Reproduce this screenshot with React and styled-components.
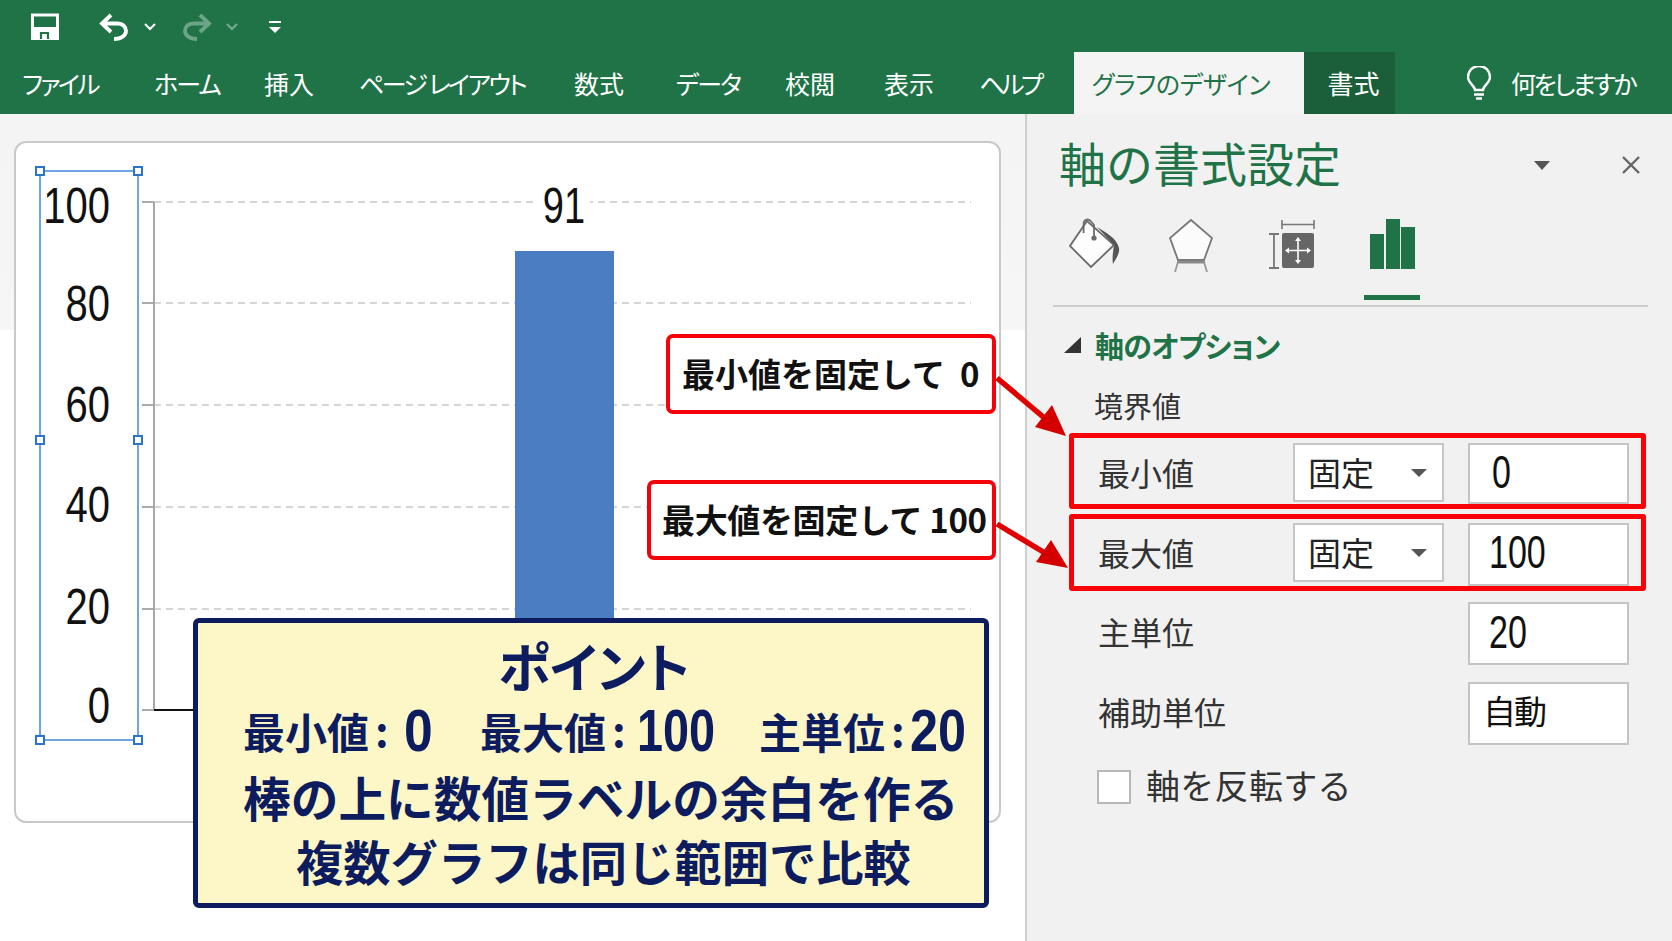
import React from "react";
import styled, { createGlobalStyle } from "styled-components";

const JP = `"Noto Sans CJK JP", "Noto Sans", sans-serif`;
const LATIN = `"Liberation Sans", "Noto Sans", sans-serif`;

const Global = createGlobalStyle`
  html, body { margin: 0; padding: 0; background: #fff; }
  body { font-family: ${JP}; font-feature-settings: "palt"; }
  * { box-sizing: border-box; }
`;

const Page = styled.div`
  position: relative;
  width: 1672px;
  height: 941px;
  overflow: hidden;
  display: flex;
  flex-direction: column;
`;

const Ribbon = styled.header`
  height: 114px;
  flex: none;
  background: #1f7347;
  color: #fff;
  display: flex;
  flex-direction: column;
`;
const Qat = styled.div`
  height: 52px;
  display: flex;
  align-items: center;
  padding-left: 31px;
`;
const QatIcon = styled.svg`
  display: block;
  flex: none;
  margin-right: ${(p) => p.$mr || 0}px;
  margin-top: 2px;
`;
const TabRow = styled.nav`
  height: 62px;
  display: flex;
  font-size: 25px;
  line-height: 62px;
`;
const Tab = styled.div`
  width: ${(p) => p.$w}px;
  flex: none;
  text-align: center;
  white-space: nowrap;
  font-size: ${(p) => p.$size || 25}px;
  letter-spacing: ${(p) => p.$ls || 0}px;
  padding: 0 ${(p) => p.$pr || 0}px 0 ${(p) => p.$pl || 0}px;
  margin-left: ${(p) => p.$ml || 0}px;
  color: ${(p) => (p.$active ? "#1f7347" : "#fff")};
  background: ${(p) => (p.$active ? "#f4f4f4" : p.$dark ? "#1b5f3a" : "transparent")};
`;
const Tell = styled.div`
  display: flex;
  align-items: center;
  gap: 20px;
  margin-left: 72px;
  white-space: nowrap;
  letter-spacing: -2.5px;
`;

const Work = styled.main`
  flex: 1;
  display: flex;
  min-height: 0;
`;
const Canvas = styled.section`
  width: 1027px;
  flex: none;
  padding: 27px 25px 0 14px;
  border-right: 2px solid #cfcfcf;
  background: linear-gradient(#f4f4f4 0, #f6f6f6 216px, #fff 216px);
`;
const Card = styled.div`
  width: 987px;
  height: 682px;
  background: #fff;
  border: 2px solid #c9c9c9;
  border-radius: 12px;
  overflow: hidden;
`;
const ChartSvg = styled.svg`
  display: block;
  width: 983px;
  height: 678px;
  font-family: ${LATIN};
`;

const Panel = styled.aside`
  flex: 1;
  background: #f1f1f1;
  color: #333;
`;
const TitleRow = styled.div`
  display: flex;
  align-items: center;
  margin-top: 28px;
  height: 46px;
  padding-left: 32px;
`;
const Title = styled.h2`
  margin: -6px 0 0;
  font-size: 47px;
  font-weight: 400;
  line-height: 46px;
  color: #1f7347;
  font-feature-settings: normal;
  width: 475px;
  white-space: nowrap;
`;
const PanelTabs = styled.div`
  display: flex;
  margin: 30px 24px 0 26px;
  padding-left: 16px;
  height: 89px;
  border-bottom: 2px solid #cbcbcb;
`;
const PanelTab = styled.div`
  width: 100px;
  height: 82px;
  display: flex;
  flex-direction: column;
  justify-content: space-between;
  align-items: flex-start;
`;
const TabMark = styled.div`
  width: 56px;
  height: 5px;
  margin-left: -5px;
  background: #1f7347;
`;
const Section = styled.div`
  display: flex;
  align-items: center;
  gap: 14px;
  height: 40px;
  margin: 18px 0 0 37px;
`;
const SectionName = styled.h3`
  margin: 0;
  font-size: 29px;
  font-weight: 700;
  color: #1f7347;
  white-space: nowrap;
  letter-spacing: -0.6px;
`;
const Group = styled.div`
  height: 40px;
  line-height: 40px;
  margin: 20px 0 0 67px;
  font-size: 29px;
  color: #333;
  font-feature-settings: normal;
`;
const Highlight = styled.div`
  display: flex;
  align-items: flex-start;
  width: 577px;
  height: ${(p) => p.$h}px;
  margin: ${(p) => p.$mt}px 0 0 42px;
  padding: ${(p) => p.$pt}px 0 0 24px;
  border: 5px solid #fb0007;
  border-radius: 3px;
`;
const Row = styled.div`
  display: flex;
  align-items: flex-start;
  height: 63px;
  margin: ${(p) => p.$mt}px 0 0 71px;
`;
const Label = styled.div`
  width: ${(p) => p.$w}px;
  flex: none;
  height: 59px;
  line-height: 59px;
  font-size: 32px;
  color: #333;
  font-feature-settings: normal;
  white-space: nowrap;
`;
const Select = styled.div`
  width: 151px;
  height: 59px;
  margin-right: 24px;
  flex: none;
  display: flex;
  align-items: center;
  justify-content: space-between;
  padding: 0 15px 0 13px;
  background: #fff;
  border: 2px solid #c6c6c6;
  font-size: 33px;
  color: #222;
  font-feature-settings: normal;
`;
const SelectText = styled.span`
  line-height: 1;
  margin-top: -1px;
`;
const Caret = styled.span`
  width: 0;
  height: 0;
  border-left: 8px solid transparent;
  border-right: 8px solid transparent;
  border-top: 8px solid #555;
`;
const Field = styled.div`
  width: 161px;
  height: ${(p) => p.$h}px;
  flex: none;
  padding-left: ${(p) => p.$pl}px;
  background: #fff;
  border: 2px solid #c4c4c4;
  color: #111;
  white-space: nowrap;
`;
const Digits = styled.span`
  display: inline-block;
  font-family: ${LATIN};
  font-size: 46px;
  line-height: ${(p) => p.$lh}px;
  transform: scaleX(0.74);
  transform-origin: 0 50%;
`;
const Kanji = styled.span`
  display: inline-block;
  font-size: 33px;
  line-height: ${(p) => p.$lh}px;
  letter-spacing: -2px;
  font-feature-settings: normal;
`;
const CheckRow = styled.div`
  display: flex;
  align-items: center;
  gap: 15px;
  height: 34px;
  margin: 25px 0 0 70px;
  font-size: 34px;
  color: #333;
  font-feature-settings: normal;
  white-space: nowrap;
`;
const CheckText = styled.span`
  line-height: 1;
  margin-top: -4px;
  letter-spacing: 0.3px;
`;
const Check = styled.span`
  width: 34px;
  height: 34px;
  flex: none;
  background: #fff;
  border: 2px solid #b8b8b8;
`;

const Callout = styled.div`
  position: absolute;
  left: ${(p) => p.$x}px;
  top: ${(p) => p.$y}px;
  width: ${(p) => p.$w}px;
  height: 80px;
  padding: 0 0 2px ${(p) => p.$pl}px;
  display: flex;
  align-items: center;
  background: #fff;
  border: 4px solid #f6000a;
  border-radius: 7px;
  font-size: 33px;
  font-weight: 700;
  letter-spacing: ${(p) => p.$ls || 0}px;
  font-feature-settings: normal;
  color: #111;
  white-space: pre;
`;
const Arrows = styled.svg`
  position: absolute;
  left: 990px;
  top: 370px;
  width: 90px;
  height: 210px;
`;
const Note = styled.div`
  position: absolute;
  left: 193px;
  top: 618px;
  width: 796px;
  height: 290px;
  background: #fdf7c8;
  border: 5px solid #0c1c5e;
  border-radius: 6px;
  color: #0c1c5e;
  font-weight: 700;
  display: flex;
  flex-direction: column;
  align-items: flex-start;
`;
const NoteLine = styled.div`
  height: ${(p) => p.$h}px;
  line-height: ${(p) => p.$h}px;
  font-size: ${(p) => p.$size}px;
  white-space: nowrap;
  margin: ${(p) => p.$mt || 0}px 0 0 ${(p) => p.$ml}px;
  font-feature-settings: ${(p) => (p.$plain ? "normal" : '"palt"')};
`;
const Stats = styled.div`
  display: flex;
  align-items: center;
  height: 64px;
  margin: 2px 0 0 45px;
  font-size: 42px;
  line-height: 64px;
  white-space: nowrap;
  font-feature-settings: normal;
`;
const Stat = styled.span`
  display: flex;
  align-items: center;
  width: ${(p) => p.$w}px;
`;
const Colon = styled.span`
  margin-left: 6px;
  margin-top: -4px;
`;
const Num = styled.span`
  display: inline-block;
  font-family: ${LATIN};
  font-size: 60px;
  line-height: 64px;
  width: ${(p) => p.$w}px;
  margin-left: ${(p) => p.$ml}px;
  transform: scaleX(${(p) => p.$sx});
  transform-origin: 0 50%;
`;

const axis = [
  { v: "100", y: 202, ty: 206 },
  { v: "80", y: 303, ty: 304 },
  { v: "60", y: 405, ty: 405 },
  { v: "40", y: 507, ty: 505 },
  { v: "20", y: 609, ty: 607 },
  { v: "0", y: 710, ty: 706 },
];
const handles = [
  [40, 171], [138, 171], [40, 440], [138, 440], [40, 740], [138, 740],
];

function Chart() {
  return (
    <ChartSvg viewBox="16 143 983 678" role="img">
      {axis.slice(0, 5).map((a) => (
        <line key={a.v} x1="154" x2="971" y1={a.y} y2={a.y} stroke="#c8c8c8" strokeWidth="1.6" strokeDasharray="7 5" />
      ))}
      <rect x="515" y="251" width="99" height="380" fill="#4a7dc1" />
      {axis.map((a) => (
        <line key={a.v + "t"} x1="142" x2="154" y1={a.y} y2={a.y} stroke="#aaa" strokeWidth="2" />
      ))}
      <line x1="154" x2="154" y1="202" y2="711" stroke="#a8a8a8" strokeWidth="2" />
      <line x1="154" x2="200" y1="710" y2="710" stroke="#111" strokeWidth="2" />
      <rect x="536" y="186" width="54" height="40" fill="#fff" />
      <text transform="translate(564 223) scale(.76 1)" textAnchor="middle" fontSize="50" fill="#111">91</text>
      {axis.map((a) => (
        <text key={a.v + "l"} transform={`translate(110 ${a.ty + 17}) scale(.8 1)`} textAnchor="end" fontSize="50" fill="#111">{a.v}</text>
      ))}
      <rect x="40" y="171" width="98" height="569" fill="none" stroke="#4a90d9" strokeWidth="1.6" />
      {handles.map(([x, y]) => (
        <rect key={`${x}-${y}`} x={x - 4} y={y - 4} width="8" height="8" fill="#fff" stroke="#2a75c9" strokeWidth="2" />
      ))}
    </ChartSvg>
  );
}

const tabs = [
  ["ファイル", 120, -2.7], ["ホーム", 134, -1.8], ["挿入", 70, 0], ["ページ レイアウト", 236, -2.5], ["数式", 78, 0],
  ["データ", 140, -1.8], ["校閲", 64, 0], ["表示", 134, 0], ["ヘルプ", 68, -3.5],
];

export default function App() {
  return (
    <Page>
      <Global />
      <Ribbon>
        <Qat>
          <QatIcon $mr={40} width="28" height="28" viewBox="0 0 28 28" fill="none">
            <path d="M1.500 2h25v23.500h-25z" stroke="#fff" strokeWidth="3" />
            <path d="M1 14h26v12H1z" fill="#fff" />
            <path d="M10 26v-6h7v6" stroke="#1f7347" strokeWidth="2.200" />
          </QatIcon>
          <QatIcon $mr={14} width="30" height="28" viewBox="0 0 30 28" fill="none">
            <path d="M12 2 3 10.500l9 8.500" stroke="#fff" strokeWidth="3.800" />
            <path d="M4 10.500h14c6 0 9 3.500 9 7.500s-4 8-12 8" stroke="#fff" strokeWidth="3.800" />
          </QatIcon>
          <QatIcon $mr={25} width="14" height="10" viewBox="0 0 14 10" fill="none">
            <path d="M2 2l5 5 5-5" stroke="#fff" strokeWidth="2" />
          </QatIcon>
          <QatIcon $mr={13} width="30" height="28" viewBox="0 0 30 28" fill="none" opacity="0.35">
            <path d="M18 2l9 8.500-9 8.500" stroke="#fff" strokeWidth="3.800" />
            <path d="M26 10.500H12c-6 0-9 3.500-9 7.500s4 8 12 8" stroke="#fff" strokeWidth="3.800" />
          </QatIcon>
          <QatIcon $mr={29} width="14" height="10" viewBox="0 0 14 10" fill="none" opacity="0.4">
            <path d="M2 2l5 5 5-5" stroke="#fff" strokeWidth="2" />
          </QatIcon>
          <QatIcon width="14" height="14" viewBox="0 0 14 14" fill="none">
            <path d="M1 2h12" stroke="#fff" strokeWidth="2" />
            <path d="M1 7h12l-6 6z" fill="#fff" />
          </QatIcon>
        </Qat>
        <TabRow>
          {tabs.map(([t, w, ls]) => (
            <Tab key={t} $w={w} $ls={ls}>{t}</Tab>
          ))}
          <Tab $w={230} $active $ml={30} $pr={16} $ls={-0.3}>グラフのデザイン</Tab>
          <Tab $w={91} $dark $pl={8} $size={26}>書式</Tab>
          <Tell>
            <svg width="24" height="34" viewBox="0 0 24 34" fill="none" stroke="#fff" strokeWidth="2.400">
              <path d="M8 24c0-4-7-7-7-13a11 11 0 0 1 22 0c0 6-7 9-7 13z" />
              <path d="M7 28.500h10M9 32.500h6" />
            </svg>
            <span>何をしますか</span>
          </Tell>
        </TabRow>
      </Ribbon>
      <Work>
        <Canvas>
          <Card>
            <Chart />
          </Card>
        </Canvas>
        <Panel>
          <TitleRow>
            <Title>軸の書式設定</Title>
            <svg width="16" height="9" viewBox="0 0 16 9" style={{ flex: "none" }}>
              <path d="M0 0h16l-8 9z" fill="#555" />
            </svg>
            <svg width="20" height="20" viewBox="0 0 20 20" style={{ marginLeft: 71, flex: "none" }}>
              <path d="M2 2l16 16M18 2 2 18" stroke="#666" strokeWidth="2.400" />
            </svg>
          </TitleRow>
          <PanelTabs>
            <PanelTab>
              <svg width="52" height="52" viewBox="0 0 52 52" fill="none">
                <path d="M18 3 1 28l21 21 23-22z" fill="#fdfdfd" stroke="#6a6a6a" strokeWidth="1.800" />
                <path d="M14.600 15V6c0-4 4-6 7-3l3.400 4v13" stroke="#6a6a6a" strokeWidth="1.800" />
                <circle cx="25" cy="20" r="2.600" fill="#6a6a6a" />
                <path d="M28 9c8 5 20 11 22 21 1 6-4 12-6 16-1-6 0-12 1-19z" fill="#555" />
              </svg>
            </PanelTab>
            <PanelTab>
              <svg width="44" height="54" viewBox="0 0 44 54" fill="none">
                <path d="M22 2 43 20 35 42H9L1 20z" fill="#fbfbfb" stroke="#777" strokeWidth="1.800" />
                <path d="M8 44h28" stroke="#8a8a8a" strokeWidth="3" />
                <path d="M9 44 6 54M35 44l3 10" stroke="#999" strokeWidth="1.800" />
              </svg>
            </PanelTab>
            <PanelTab>
              <svg width="47" height="52" viewBox="1 0 47 52" fill="none">
                <path d="M14 2v9M46 2v9M14 6.500h32" stroke="#777" strokeWidth="1.600" />
                <path d="M1 16h10M6 16v34M1 50h10" stroke="#777" strokeWidth="1.800" />
                <rect x="14" y="15" width="32" height="35" rx="2" fill="#666" />
                <path d="M30 21v23M19 32.500h22" stroke="#fff" strokeWidth="1.600" />
                <path d="M30 19l-3 4h6zM30 46l-3-4h6zM17 32.500l4-3v6zM43 32.500l-4-3v6z" fill="#fff" />
              </svg>
            </PanelTab>
            <PanelTab>
              <svg width="46" height="52" viewBox="0 0 46 52">
                <path d="M1 16h14v35H1zM17 1h14v50H17zM32 9h14v42H32z" fill="#1f7347" />
              </svg>
              <TabMark />
            </PanelTab>
          </PanelTabs>
          <Section>
            <svg width="17" height="16" viewBox="0 0 17 16" style={{ flex: "none" }}>
              <path d="M17 0v16H0z" fill="#333" />
            </svg>
            <SectionName>軸のオプション</SectionName>
          </Section>
          <Group>境界値</Group>
          <Highlight $h={76} $mt={8} $pt={5}>
            <Label $w={195}>最小値</Label>
            <Select><SelectText>固定</SelectText><Caret /></Select>
            <Field $h={61} $pl={22}><Digits $lh={54}>0</Digits></Field>
          </Highlight>
          <Highlight $h={77} $mt={5} $pt={4}>
            <Label $w={195}>最大値</Label>
            <Select><SelectText>固定</SelectText><Caret /></Select>
            <Field $h={63} $pl={19}><Digits $lh={54}>100</Digits></Field>
          </Highlight>
          <Row $mt={11}>
            <Label $w={370}>主単位</Label>
            <Field $h={63} $pl={19}><Digits $lh={56}>20</Digits></Field>
          </Row>
          <Row $mt={17}>
            <Label $w={370}>補助単位</Label>
            <Field $h={63} $pl={13}><Kanji $lh={52}>自動</Kanji></Field>
          </Row>
          <CheckRow>
            <Check />
            <CheckText>軸を反転する</CheckText>
          </CheckRow>
        </Panel>
      </Work>

      <Callout $x={666} $y={334} $w={330} $pl={12}>最小値を固定して  0</Callout>
      <Callout $x={647} $y={480} $w={349} $pl={11} $ls={-0.35}>最大値を固定して 100</Callout>
      <Arrows viewBox="990 370 90 210">
        <path d="M997 378 1048 421" stroke="#e00000" strokeWidth="5.500" />
        <path d="M1066 436 1035 427 1052 405z" fill="#d40000" />
        <path d="M997 524 1050 556" stroke="#e00000" strokeWidth="5.500" />
        <path d="M1068 568 1036 562 1051 540z" fill="#d40000" />
      </Arrows>
      <Note>
        <NoteLine $h={64} $size={53} $mt={10} $ml={300}>ポイント</NoteLine>
        <Stats>
          <Stat $w={237}>最小値<Colon>:</Colon><Num $w={24} $ml={15} $sx={0.86}>0</Num></Stat>
          <Stat $w={279}>最大値<Colon>:</Colon><Num $w={73} $ml={11} $sx={0.78}>100</Num></Stat>
          <Stat $w={220}>主単位<Colon>:</Colon><Num $w={49} $ml={5} $sx={0.84}>20</Num></Stat>
        </Stats>
        <NoteLine $h={64} $size={47.700} $mt={2} $ml={45} $plain>棒の上に数値ラベルの余白を作る</NoteLine>
        <NoteLine $h={64} $size={47.300} $ml={98} $plain>複数グラフは同じ範囲で比較</NoteLine>
      </Note>
    </Page>
  );
}
